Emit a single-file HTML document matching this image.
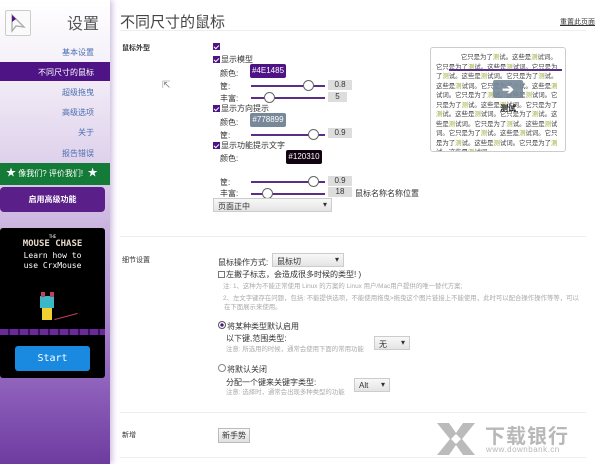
<!DOCTYPE html>
<html><head><meta charset="utf-8"><style>
*{margin:0;padding:0;box-sizing:border-box}
body{width:600px;height:464px;overflow:hidden;background:#fff;font-family:"Liberation Sans","Noto Sans CJK SC",sans-serif;font-size:8px;color:#333;position:relative}
.a{position:absolute;white-space:nowrap}
#side{position:absolute;left:0;top:0;width:110px;height:464px;background:linear-gradient(#fff 0%,#f4eff8 15%,#d9c9e8 40%,#b08fd0 65%,#8a5cb8 85%,#6e3ca0 100%);box-shadow:2px 0 6px rgba(120,80,160,.4)}
.nav{position:absolute;right:16px;font-size:8px;color:#4a6fb0}
.sl{position:absolute;height:2px;background:#5a2d86}
.kn{position:absolute;width:11px;height:11px;border-radius:50%;background:#fff;border:1px solid #666;top:-5px}
.vb{position:absolute;background:#ddd;width:24px;height:10px;font-size:8px;text-align:center;line-height:10px}
.cb{position:absolute;width:7px;height:7px;background:#fff;border:1px solid #777}
.ck{background:#4e1485;border-color:#4e1485}
.ck::after{content:"";position:absolute;left:1px;top:0px;width:2px;height:4px;border:solid #fff;border-width:0 1px 1px 0;transform:rotate(45deg)}
.sel{position:absolute;background:linear-gradient(#f8f8f8,#e4e4e4);border:1px solid #ccc;font-size:8px;padding:2px 4px}
.sel::after{content:"▾";position:absolute;right:4px;top:1px}
.gr{color:#aaa;font-size:6.4px}
.hr{position:absolute;left:120px;width:466px;height:1px;background:#eee}
.t{color:#9a3}
</style></head><body>
<div id="side">
 <div class="a" style="left:5px;top:10px;width:26px;height:26px;border:1px solid #ccc;border-radius:2px;background:#fafafa">
  <svg width="24" height="24" viewBox="0 0 24 24"><path d="M6 4 L6 20 L10 15 L18 16 Z" fill="none" stroke="#aaa" stroke-width="1.3"/><path d="M6 4 L6 11 L10 8 Z" fill="#4e1485"/></svg>
 </div>
 <div class="a" style="left:67px;top:10px;font-size:16px;color:#555">设置</div>
 <div class="nav" style="top:47px">基本设置</div>
 <div class="a" style="left:0;top:62px;width:110px;height:19px;background:#4e1485"></div>
 <div class="nav" style="top:67px;color:#fff">不同尺寸的鼠标</div>
 <div class="nav" style="top:87px">超级拖曳</div>
 <div class="nav" style="top:107px">高级选项</div>
 <div class="nav" style="top:127px">关于</div>
 <div class="nav" style="top:148px">报告错误</div>
 <div class="a" style="left:0;top:163px;width:110px;height:22px;background:#137a37;color:#fff;font-size:8px;line-height:22px;padding-left:6px"><span style="font-size:10px">★</span> 像我们? 评价我们! &nbsp;<span style="font-size:10px">★</span></div>
 <div class="a" style="left:0;top:187px;width:105px;height:25px;background:#5b1f8a;border-radius:4px;color:#fff;font-weight:bold;text-align:center;line-height:25px;font-size:8px">启用高级功能</div>
 <div class="a" style="left:0;top:228px;width:105px;height:150px;background:#000;border-radius:3px;color:#fff;text-align:center;font-family:'DejaVu Sans Mono',monospace">
  <div style="font-size:4px;margin-top:6px">THE</div>
  <div style="font-size:9px;font-weight:bold;color:#e8dcc8">MOUSE CHASE</div>
  <div style="font-size:8px;line-height:10px;margin-top:2px">Learn how to<br>use CrxMouse</div>
  <div style="position:absolute;left:40px;top:68px;width:14px;height:12px;background:#3ab8c8"></div>
  <div style="position:absolute;left:42px;top:80px;width:10px;height:12px;background:#f0d030"></div>
  <div style="position:absolute;left:41px;top:64px;width:4px;height:5px;background:#c04060"></div>
  <div style="position:absolute;left:50px;top:64px;width:4px;height:5px;background:#c04060"></div>
  <div style="position:absolute;left:54px;top:88px;width:24px;height:1px;background:#c04060;transform:rotate(-15deg)"></div>
  <div style="position:absolute;left:0;top:101px;width:105px;height:6px;background:repeating-linear-gradient(90deg,#6a2a9a 0 8px,#3a1060 8px 10px)"></div>
  <div style="position:absolute;left:15px;top:118px;width:75px;height:25px;background:#1a8ae0;border-radius:3px;font-size:10px;line-height:25px">Start</div>
 </div>
</div>
<div class="a" style="left:120px;top:11px;font-size:15px;color:#444">不同尺寸的鼠标</div>
<div class="a" style="left:560px;top:17px;font-size:7px;text-decoration:underline">重置此页面</div>
<div class="hr" style="top:30px"></div>
<div class="a" style="left:122px;top:43px;font-weight:bold;font-size:7px">鼠标外型</div>
<div class="a" style="left:162px;top:80px;font-size:10px;color:#888">⇱</div>

<div class="cb ck" style="left:213px;top:43px"></div>
<div class="cb ck" style="left:213px;top:56px"></div><div class="a" style="left:221px;top:54px">显示模型</div>
<div class="a" style="left:220px;top:68px">颜色:</div>
<div class="a" style="left:250px;top:64px;width:36px;height:14px;background:#4e1485;border-radius:2px;color:#fff;text-align:center;line-height:14px">#4E1485</div>
<div class="a" style="left:220px;top:81px">筐:</div>
<div class="sl" style="left:251px;top:85px;width:74px"><div class="kn" style="left:52px"></div></div>
<div class="vb" style="left:328px;top:80px">0.8</div>
<div class="a" style="left:220px;top:93px">丰富:</div>
<div class="sl" style="left:251px;top:97px;width:74px"><div class="kn" style="left:13px"></div></div>
<div class="vb" style="left:328px;top:92px;width:19px">5</div>
<div class="cb ck" style="left:213px;top:105px"></div><div class="a" style="left:221px;top:103px">显示方向提示</div>
<div class="a" style="left:220px;top:117px">颜色:</div>
<div class="a" style="left:250px;top:113px;width:36px;height:14px;background:#778899;border-radius:2px;color:#fff;text-align:center;line-height:14px">#778899</div>
<div class="a" style="left:220px;top:130px">筐:</div>
<div class="sl" style="left:251px;top:134px;width:74px"><div class="kn" style="left:57px"></div></div>
<div class="vb" style="left:328px;top:128px">0.9</div>
<div class="cb ck" style="left:213px;top:142px"></div><div class="a" style="left:221px;top:140px">显示功能提示文字</div>
<div class="a" style="left:220px;top:153px">颜色:</div>
<div class="a" style="left:286px;top:150px;width:36px;height:14px;background:#120310;border-radius:2px;color:#fff;text-align:center;line-height:14px">#120310</div>
<div class="a" style="left:220px;top:177px">筐:</div>
<div class="sl" style="left:251px;top:181px;width:74px"><div class="kn" style="left:57px"></div></div>
<div class="vb" style="left:328px;top:176px">0.9</div>
<div class="a" style="left:220px;top:188px">丰富:</div>
<div class="sl" style="left:251px;top:193px;width:74px"><div class="kn" style="left:11px"></div></div>
<div class="vb" style="left:328px;top:187px">18</div>
<div class="a" style="left:355px;top:188px">鼠标名称名称位置</div>
<div class="sel" style="left:213px;top:198px;width:119px;height:14px">页面正中</div>

<div class="a" style="left:430px;top:47px;width:136px;height:105px;border:1px solid #ccc;border-radius:3px;padding:5px 5px;white-space:normal;font-size:6.4px;line-height:9.5px;color:#444;overflow:hidden;word-break:break-all">
&nbsp;&nbsp;&nbsp;&nbsp;&nbsp;&nbsp;&nbsp;&nbsp;&nbsp;&nbsp;&nbsp;&nbsp;&nbsp;&nbsp;它只是为了<span class="t">测</span>试。这些是<span class="t">测</span>试词。它只是为了<span class="t">测</span>试。这些是<span class="t">测</span>试词。它只是为了<span class="t">测</span>试。这些是<span class="t">测</span>试词。它只是为了<span class="t">测</span>试。这些是<span class="t">测</span>试词。它只是为了<span class="t">测</span>试。这些是<span class="t">测</span>试词。它只是为了<span class="t">测</span>试。这些是<span class="t">测</span>试词。它只是为了<span class="t">测</span>试。这些是<span class="t">测</span>试词。它只是为了<span class="t">测</span>试。这些是<span class="t">测</span>试词。它只是为了<span class="t">测</span>试。这些是<span class="t">测</span>试词。它只是为了<span class="t">测</span>试。这些是<span class="t">测</span>试词。它只是为了<span class="t">测</span>试。这些是<span class="t">测</span>试词。它只是为了<span class="t">测</span>试。这些是<span class="t">测</span>试词。它只是为了<span class="t">测</span>试。这些是<span class="t">测</span>试词。
</div>
<div class="a" style="left:449px;top:69px;width:113px;height:2px;background:#5a2d86"></div>
<div class="a" style="left:493px;top:80px;width:30px;height:18px;background:#778899;opacity:.9;border-radius:2px;color:#fff;font-size:14px;text-align:center;line-height:18px;font-weight:bold">➔</div>
<div class="a" style="left:500px;top:103px;font-size:8px;font-weight:bold;color:#111">测试</div>

<div class="hr" style="top:236px"></div>
<div class="a" style="left:122px;top:255px;font-size:7px">细节设置</div>
<div class="a" style="left:218px;top:257px">鼠标操作方式:</div>
<div class="sel" style="left:272px;top:253px;width:72px;height:14px">鼠标切</div>
<div class="cb" style="left:218px;top:271px"></div><div class="a" style="left:226px;top:269px">左撇子标志，会造成很多时候的类型! )</div>
<div class="a gr" style="left:223px;top:281px">注: 1、这种为不能正常使用 Linux 的方案的 Linux 用户/Mac用户提供的唯一替代方案;</div>
<div class="a gr" style="left:223px;top:293px">2、左文字键存在问题，包括: 不能提供选项，不能使用拖曳&gt;拖曳这个图片链接上不能使用，此时可以配合操作操作等等，可以</div>
<div class="a gr" style="left:224px;top:302px">在下面展示来使用。</div>
<div class="a" style="left:218px;top:321px;width:8px;height:8px;border-radius:50%;border:1px solid #555;background:radial-gradient(#4e1485 35%,#fff 45%)"></div><div class="a" style="left:227px;top:321px">将某种类型默认启用</div>
<div class="a" style="left:226px;top:333px">以下键,范围类型:</div>
<div class="a gr" style="left:226px;top:344px">注意: 所选用的时候，通常会使用下面的常用功能</div>
<div class="sel" style="left:374px;top:336px;width:36px;height:14px">无</div>
<div class="a" style="left:218px;top:364px;width:8px;height:8px;border-radius:50%;border:1px solid #888;background:#fff"></div><div class="a" style="left:227px;top:364px">将默认关闭</div>
<div class="a" style="left:226px;top:377px">分配一个键来关键字类型:</div>
<div class="a gr" style="left:226px;top:387px">注意: 选择时，通常会出现多种类型的功能</div>
<div class="sel" style="left:354px;top:378px;width:36px;height:14px">Alt</div>
<div class="hr" style="top:412px"></div>
<div class="a" style="left:122px;top:430px;font-size:7px">新增</div>
<div class="a" style="left:218px;top:428px;width:32px;height:15px;border:1px solid #bbb;background:linear-gradient(#f8f8f8,#e0e0e0);text-align:center;line-height:13px">新手势</div>
<div class="hr" style="top:457px"></div>

<svg class="a" style="left:435px;top:421px" width="42" height="36" viewBox="0 0 42 36"><path d="M2 2 H14 L21 12 L28 2 H40 L27 18 L40 34 H28 L21 24 L14 34 H2 L15 18 Z" fill="#bbb"/><path d="M21 13 L26 18 L21 23 L16 18 Z" fill="#fff"/></svg>
<div class="a" style="left:485px;top:420px;font-size:20px;color:#b8b8b8;font-weight:bold;letter-spacing:1px">下载银行</div>
<div class="a" style="left:486px;top:445px;font-size:8px;color:#b8b8b8;letter-spacing:.5px">www.downbank.cn</div>
</body></html>
